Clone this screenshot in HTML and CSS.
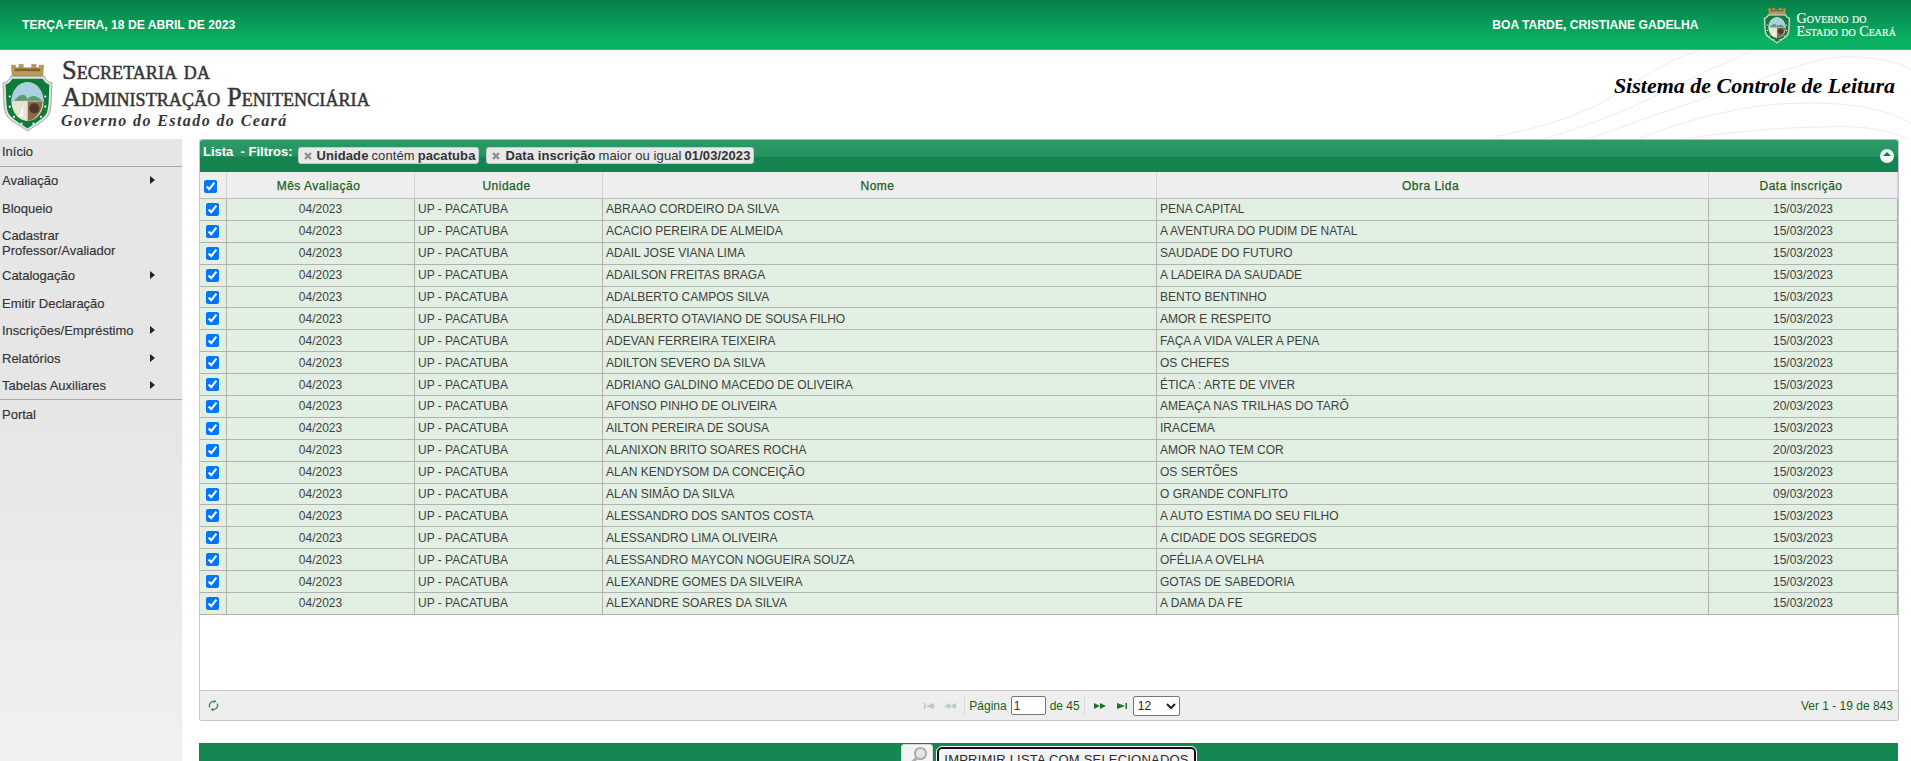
FILE: index.html
```html
<!DOCTYPE html>
<html lang="pt-BR">
<head>
<meta charset="utf-8">
<title>Sistema de Controle de Leitura</title>
<link rel="stylesheet" href="styles.css">
</head>
<body>
<header class="topbar">
  <span class="topdate">TERÇA-FEIRA, 18 DE ABRIL DE 2023</span>
  <span class="greeting">BOA TARDE, CRISTIANE GADELHA</span>
  <div class="gov">
    <svg class="govshield" viewBox="0 0 60 84"><use href="#shield"/></svg>
    <div class="govtext"><span>Governo do</span><span>Estado do Ceará</span></div>
  </div>
</header>
<div class="brand">
  <svg class="waves" viewBox="0 15 1293 270" fill="none" stroke="#ececec" stroke-width="3">
    <path d="M45 275C150 255 260 225 350 180S540 50 660 15"/>
    <path d="M195 280C300 250 420 205 500 165S720 60 820 15"/>
    <path d="M330 280C480 225 700 150 850 100C960 60 1030 35 1100 35C1180 35 1250 50 1293 72"/>
    <path d="M480 280C600 230 800 175 950 175C1100 170 1220 190 1293 235"/>
    <path d="M620 280C760 260 900 245 1100 245C1180 245 1250 265 1293 285"/>
  </svg>
  <svg class="shield" viewBox="0 0 60 84">
    <defs>
      <g id="shield">
        <path d="M12 18l-1-13h5v3h4V4h5v4h10V4h5v4h4V5h5l-1 13z" fill="#b99a58" stroke="#8c7440" stroke-width=".6"/>
        <path d="M15 9h30v3H15z" fill="#7c6436"/>
        <path d="M10 18h40c1 5 5 7 9 8-1 12 0 26-3 36-4 9-16 13-26 21C20 75 8 71 4 62 1 52 2 38 1 26c4-1 8-3 9-8z" fill="#dfe3de" stroke="#8f9a92"/>
        <path d="M12 21h36c2 4 5 6 8 7-1 11 0 23-3 33-4 8-14 12-23 19C21 73 11 69 7 61 4 51 5 39 4 28c3-1 6-3 8-7z" fill="#0f7a3a"/>
        <ellipse cx="30" cy="48" rx="19" ry="23" fill="#e6e2b8"/>
        <path d="M11 48c0-12 8-23 19-23s19 11 19 23z" fill="#a9cfe0"/>
        <path d="M14 47c7-8 13-10 16-2 4-5 11-5 17 2z" fill="#5e9a6a"/>
        <path d="M30 48h18c-1 12-8 22-18 23z" fill="#8a6a48"/>
        <path d="M12 52c4 8 10 15 18 19V48H12z" fill="#e8e4d4"/>
        <path d="M19 66l6-12v12z" fill="#fff"/>
        <circle cx="38" cy="56" r="6" fill="#4a3a2c"/>
        <g fill="#fff"><circle cx="9" cy="42" r="1.3"/><circle cx="9" cy="54" r="1.3"/><circle cx="14" cy="66" r="1.3"/><circle cx="23" cy="74" r="1.3"/><circle cx="37" cy="74" r="1.3"/><circle cx="46" cy="66" r="1.3"/><circle cx="51" cy="54" r="1.3"/><circle cx="51" cy="42" r="1.3"/></g>
      </g>
    </defs>
    <use href="#shield"/>
  </svg>
  <div class="brandtext">
    <div class="line1">Secretaria da</div>
    <div class="line2">Administração Penitenciária</div>
    <div class="line3">Governo do Estado do Ceará</div>
  </div>
  <h1 class="systitle">Sistema de Controle de Leitura</h1>
</div>
<div class="main">
  <nav class="side">
    <a class="mi ruled first">Início</a>
    <a class="mi">Avaliação<i class="arrow"></i></a>
    <a class="mi">Bloqueio</a>
    <a class="mi two">Cadastrar<br>Professor/Avaliador</a>
    <a class="mi">Catalogação<i class="arrow"></i></a>
    <a class="mi">Emitir Declaração</a>
    <a class="mi">Inscrições/Empréstimo<i class="arrow"></i></a>
    <a class="mi">Relatórios<i class="arrow"></i></a>
    <a class="mi ruled">Tabelas Auxiliares<i class="arrow"></i></a>
    <a class="mi last">Portal</a>
  </nav>
  <section class="content">
    <div class="panel">
      <div class="caption">
        <span class="capt">Lista&nbsp; - Filtros:</span>
        <span class="chip"><svg class="x" viewBox="0 0 10 10"><path d="M2 2l6 6M8 2l-6 6"/></svg><b>Unidade</b> contém <b>pacatuba</b></span>
        <span class="chip"><svg class="x" viewBox="0 0 10 10"><path d="M2 2l6 6M8 2l-6 6"/></svg><b>Data inscrição</b> maior ou igual <b>01/03/2023</b></span>
        <span class="collapse"></span>
      </div>
      <div class="gridwrap">
        <table class="grid">
          <colgroup><col class="c0"><col class="c1"><col class="c2"><col class="c3"><col class="c4"><col class="c5"></colgroup>
          <thead>
            <tr><th><input class="ck head" type="checkbox" checked></th><th>Mês Avaliação</th><th>Unidade</th><th>Nome</th><th>Obra Lida</th><th>Data inscrição</th></tr>
          </thead>
          <tbody>
            <tr><td class="tc"><input class="ck" type="checkbox" checked></td><td class="tc">04/2023</td><td>UP - PACATUBA</td><td>ABRAAO CORDEIRO DA SILVA</td><td>PENA CAPITAL</td><td class="tc">15/03/2023</td></tr>
            <tr><td class="tc"><input class="ck" type="checkbox" checked></td><td class="tc">04/2023</td><td>UP - PACATUBA</td><td>ACACIO PEREIRA DE ALMEIDA</td><td>A AVENTURA DO PUDIM DE NATAL</td><td class="tc">15/03/2023</td></tr>
            <tr><td class="tc"><input class="ck" type="checkbox" checked></td><td class="tc">04/2023</td><td>UP - PACATUBA</td><td>ADAIL JOSE VIANA LIMA</td><td>SAUDADE DO FUTURO</td><td class="tc">15/03/2023</td></tr>
            <tr><td class="tc"><input class="ck" type="checkbox" checked></td><td class="tc">04/2023</td><td>UP - PACATUBA</td><td>ADAILSON FREITAS BRAGA</td><td>A LADEIRA DA SAUDADE</td><td class="tc">15/03/2023</td></tr>
            <tr><td class="tc"><input class="ck" type="checkbox" checked></td><td class="tc">04/2023</td><td>UP - PACATUBA</td><td>ADALBERTO CAMPOS SILVA</td><td>BENTO BENTINHO</td><td class="tc">15/03/2023</td></tr>
            <tr><td class="tc"><input class="ck" type="checkbox" checked></td><td class="tc">04/2023</td><td>UP - PACATUBA</td><td>ADALBERTO OTAVIANO DE SOUSA FILHO</td><td>AMOR E RESPEITO</td><td class="tc">15/03/2023</td></tr>
            <tr><td class="tc"><input class="ck" type="checkbox" checked></td><td class="tc">04/2023</td><td>UP - PACATUBA</td><td>ADEVAN FERREIRA TEIXEIRA</td><td>FAÇA A VIDA VALER A PENA</td><td class="tc">15/03/2023</td></tr>
            <tr><td class="tc"><input class="ck" type="checkbox" checked></td><td class="tc">04/2023</td><td>UP - PACATUBA</td><td>ADILTON SEVERO DA SILVA</td><td>OS CHEFES</td><td class="tc">15/03/2023</td></tr>
            <tr><td class="tc"><input class="ck" type="checkbox" checked></td><td class="tc">04/2023</td><td>UP - PACATUBA</td><td>ADRIANO GALDINO MACEDO DE OLIVEIRA</td><td>ÉTICA : ARTE DE VIVER</td><td class="tc">15/03/2023</td></tr>
            <tr><td class="tc"><input class="ck" type="checkbox" checked></td><td class="tc">04/2023</td><td>UP - PACATUBA</td><td>AFONSO PINHO DE OLIVEIRA</td><td>AMEAÇA NAS TRILHAS DO TARÔ</td><td class="tc">20/03/2023</td></tr>
            <tr><td class="tc"><input class="ck" type="checkbox" checked></td><td class="tc">04/2023</td><td>UP - PACATUBA</td><td>AILTON PEREIRA DE SOUSA</td><td>IRACEMA</td><td class="tc">15/03/2023</td></tr>
            <tr><td class="tc"><input class="ck" type="checkbox" checked></td><td class="tc">04/2023</td><td>UP - PACATUBA</td><td>ALANIXON BRITO SOARES ROCHA</td><td>AMOR NAO TEM COR</td><td class="tc">20/03/2023</td></tr>
            <tr><td class="tc"><input class="ck" type="checkbox" checked></td><td class="tc">04/2023</td><td>UP - PACATUBA</td><td>ALAN KENDYSOM DA CONCEIÇÃO</td><td>OS SERTÕES</td><td class="tc">15/03/2023</td></tr>
            <tr><td class="tc"><input class="ck" type="checkbox" checked></td><td class="tc">04/2023</td><td>UP - PACATUBA</td><td>ALAN SIMÃO DA SILVA</td><td>O GRANDE CONFLITO</td><td class="tc">09/03/2023</td></tr>
            <tr><td class="tc"><input class="ck" type="checkbox" checked></td><td class="tc">04/2023</td><td>UP - PACATUBA</td><td>ALESSANDRO DOS SANTOS COSTA</td><td>A AUTO ESTIMA DO SEU FILHO</td><td class="tc">15/03/2023</td></tr>
            <tr><td class="tc"><input class="ck" type="checkbox" checked></td><td class="tc">04/2023</td><td>UP - PACATUBA</td><td>ALESSANDRO LIMA OLIVEIRA</td><td>A CIDADE DOS SEGREDOS</td><td class="tc">15/03/2023</td></tr>
            <tr><td class="tc"><input class="ck" type="checkbox" checked></td><td class="tc">04/2023</td><td>UP - PACATUBA</td><td>ALESSANDRO MAYCON NOGUEIRA SOUZA</td><td>OFÉLIA A OVELHA</td><td class="tc">15/03/2023</td></tr>
            <tr><td class="tc"><input class="ck" type="checkbox" checked></td><td class="tc">04/2023</td><td>UP - PACATUBA</td><td>ALEXANDRE GOMES DA SILVEIRA</td><td>GOTAS DE SABEDORIA</td><td class="tc">15/03/2023</td></tr>
            <tr><td class="tc"><input class="ck" type="checkbox" checked></td><td class="tc">04/2023</td><td>UP - PACATUBA</td><td>ALEXANDRE SOARES DA SILVA</td><td>A DAMA DA FE</td><td class="tc">15/03/2023</td></tr>
          </tbody>
        </table>
      </div>
      <div class="pager">
        <div class="pleft">
          <svg class="refresh" viewBox="0 0 12 14" fill="none" stroke="#3f8a4f" stroke-width="1.5"><path d="M2 9a4.5 4.5 0 0 1 6-6"/><path d="M10 5a4.5 4.5 0 0 1-6 6"/><path d="M7 .5l2 2.500-3 1z" fill="#3f8a4f" stroke="none"/><path d="M5 13.500l-2-2.500 3-1z" fill="#3f8a4f" stroke="none"/></svg>
        </div>
        <div class="pcenter">
          <svg class="nav off" viewBox="0 0 12 8"><path d="M1 1h1.500v6H1zM11 1v6L3 4z"/></svg>
          <svg class="nav off wide prevb" viewBox="0 0 14 8"><path d="M7 1v6L1 4zM13 1v6L7 4z"/></svg>
          <span class="sep"></span>
          <span class="ptxt">Página</span><input class="pinput" value="1"><span class="ptxt">de 45</span>
          <span class="sep sepr"></span>
          <svg class="nav wide" viewBox="0 0 14 8"><path d="M1 1v6l6-3zM7 1v6l6-3z"/></svg>
          <svg class="nav lastb" viewBox="0 0 12 8"><path d="M1 1v6l8-3zM9.500 1H11v6H9.500z"/></svg>
          <select class="psel"><option>12</option></select>
        </div>
        <div class="pright">Ver 1 - 19 de 843</div>
      </div>
    </div>
    <div class="actionbar">
      <button class="magbtn" type="button"><svg viewBox="0 0 16 16" fill="none"><circle cx="10" cy="6" r="4.500" fill="#e4e4e4" stroke="#aaa" stroke-width="1.500"/><path d="M7 9.500L2.500 14" stroke="#b0b0b0" stroke-width="2.500"/></svg></button>
      <button class="printbtn" type="button">IMPRIMIR LISTA COM SELECIONADOS</button>
    </div>
  </section>
</div>
</body>
</html>
```
FILE: styles.css
```css
* { box-sizing: border-box; }
html, body { margin: 0; height: 761px; overflow: hidden; background: #fff; }
body { font-family: "Liberation Sans", Arial, sans-serif; font-size: 12px; color: #333; }

.topbar {
  height: 50px; display: flex; align-items: center; color: #fff; font-weight: bold; font-size: 12.150px;
  background: linear-gradient(#058049, #0bb163 85%); border-bottom: 1px solid #35bd7c;
}
.topdate { margin-left: 22px; }
.greeting { margin-left: auto; margin-right: 64px; }
.gov { display: flex; align-items: center; margin-right: 15px; gap: 6px; }
.govshield { width: 28px; height: 38px; flex: none; }
.govtext { display: flex; flex-direction: column; font-family: "Liberation Serif", serif; font-weight: normal; font-variant: small-caps; font-size: 14.200px; line-height: 13px; color: #f3f7f3; white-space: nowrap; -webkit-text-stroke: .2px #f3f7f3; }

.brand { height: 89px; position: relative; display: flex; align-items: flex-start; overflow: hidden; }
.waves { position: absolute; right: 0; top: 0; width: 431px; height: 90px; }
.shield { width: 53px; height: 71px; margin: 11px 0 0 1px; flex: none; position: relative; }
.brandtext { margin-left: 8px; font-family: "Liberation Serif", serif; color: #363636; position: relative; }
.line1, .line2 { font-variant: small-caps; font-weight: normal; font-size: 26.400px; line-height: 27px; letter-spacing: .09px; -webkit-text-stroke: .5px #363636; white-space: nowrap; }
.line1 { margin-top: 7px; }
.line3 { font-style: italic; font-weight: bold; font-size: 16px; line-height: 20px; letter-spacing: 1.400px; white-space: nowrap; margin-left: -1px; }
.systitle { margin: 23px 16px 0 auto; position: relative; font-family: "Liberation Serif", serif; font-style: italic; font-weight: bold; font-size: 22px; line-height: 26px; color: #000; }

.main { display: flex; height: 622px; }
.side { width: 182px; flex: none; background: linear-gradient(#e6e6e6 0, #e6e6e6 46%, #f0f0f0); font-size: 13px; color: #333; -webkit-text-stroke: .15px #333; }
.mi { display: flex; align-items: center; height: 27.500px; padding-left: 2px; position: relative; white-space: nowrap; }
.mi.ruled { border-bottom: 1px solid #a8a8a8; height: 28px; }
.mi.first { padding-bottom: 2px; }
.mi.two { display: block; height: 40px; line-height: 15px; padding-top: 6px; }
.mi.last { margin-top: 1px; }
.arrow { position: absolute; left: 150px; top: 9px; border-left: 5px solid #222; border-top: 4px solid transparent; border-bottom: 4px solid transparent; }

.content { width: 1700px; margin-left: 17px; }
.panel { height: 582px; border: 1px solid #c5c5c5; border-top: 0; border-radius: 3px; display: flex; flex-direction: column; background: #fff; }
.caption {
  height: 33px; flex: none; position: relative; display: flex; align-items: flex-start; color: #fff; font-weight: bold; font-size: 13px;
  background: linear-gradient(#2c9a66, #25935f 50%, #14834f 55%, #14834f); border-top: 1px solid #a8c8b6; border-radius: 3px 3px 0 0;
}
.capt { margin: 4px 5px 0 3px; }
.chip { margin: 7px 7px 0 0; height: 17px; line-height: 15px; padding: 0 3px 0 2px; background: #e8e8e8; border: 1px solid #c8c8c8; border-radius: 3px; color: #333; font-weight: normal; white-space: nowrap; display: flex; align-items: center; gap: 3px; letter-spacing: .09px; }
.chip b { font-weight: bold; }
.x { width: 10px; height: 10px; margin: 1px 1px 0 2px; fill: none; stroke: #8e8e8e; stroke-width: 2.400; flex: none; }
.collapse { position: absolute; right: 4px; top: 9px; width: 14px; height: 14px; border-radius: 50%; background: #f4f4f4; }
.collapse::after { content: ""; position: absolute; left: 3px; top: 3px; border-left: 4px solid transparent; border-right: 4px solid transparent; border-bottom: 4px solid #137a4a; }

.gridwrap { flex: 1; min-height: 0; overflow: hidden; }
.grid { table-layout: fixed; border-collapse: separate; border-spacing: 0; width: 1698px; font-size: 12px; }
.c0 { width: 27px; } .c1 { width: 188px; } .c2 { width: 188px; } .c3 { width: 554px; } .c4 { width: 552px; } .c5 { width: 189px; }
.grid th { height: 27px; background: #eee; color: #1b5e20; font-weight: normal; font-size: 12px; text-align: center; padding: 2px 4px 0 0; border-right: 1px solid #d5d5d5; border-bottom: 1px solid #bcbcbc; letter-spacing: .5px; -webkit-text-stroke: .25px #1b5e20; }
.grid td { height: 21.900px; background: #e2f0e3; padding: 0 2px 0 3px; color: #3f3f3f; border-right: 1px solid #b2b2b2; border-bottom: 1px solid #b2b2b2; white-space: nowrap; overflow: hidden; }
.grid td.tc { text-align: center; padding: 0; }
.grid td:first-child { padding-right: 2px; }
.ck { width: 13px; height: 13px; display: block; margin: auto; accent-color: #0075ff; }
.ck.head { margin: 0 0 0 4px; }

.pager { height: 30px; flex: none; display: grid; grid-template-columns: 1fr auto 1fr; align-items: center; background: #eee; border-top: 1px solid #ccc; color: #1b5e20; font-size: 12px; border-radius: 0 0 3px 3px; }
.pleft { padding-left: 8px; display: flex; }
.refresh { width: 11px; height: 13px; }
.pcenter { display: flex; align-items: center; height: 24px; margin-left: 5px; }
.nav { width: 12px; height: 8px; fill: #1f6e32; flex: none; }
.nav.wide { width: 14px; margin-right: 9px; }
.nav.off { fill: #b5cfbb; margin-right: 8px; }
.nav.prevb { margin-right: 7px; }
.nav.lastb { margin-right: 5px; }
.sep { width: 1px; height: 20px; background: #dcdcdc; margin: 0 4px 0 0; }
.sep.sepr { margin: 0 8px 0 0; }
.ptxt { margin: 0 4px 0 0; }
.pinput { width: 35px; height: 19px; border: 1px solid #767676; border-radius: 2px; font: 12px "Liberation Sans", Arial, sans-serif; padding: 0 2px; margin-right: 4px; background: #fff; color: #333; }
.psel { width: 47px; height: 20px; font: 12px "Liberation Sans", Arial, sans-serif; background: #fff; color: #222; border: 1px solid #767676; border-radius: 2px; }
.pright { text-align: right; padding-right: 5px; }

.actionbar { margin-top: 22px; height: 40px; width: 1699px; background: #148752; display: flex; justify-content: center; gap: 4px; padding: 1px 0 0 0; align-items: flex-start; }
.magbtn { width: 32px; height: 30px; border: 1px solid #d8d8d8; border-radius: 3px; background: #f4f4f4; padding: 0 6px 6px; }
.magbtn svg { display: block; width: 20px; height: 20px; }
.printbtn { height: 24px; margin-top: 3px; padding: 0 5px; background: #f3f3f3; border: 2px solid #111; border-radius: 5px; outline: 1px solid #fff; font: 13px/1 "Liberation Sans", Arial, sans-serif; color: #2b2b2b; white-space: nowrap; letter-spacing: .2px; }
```
